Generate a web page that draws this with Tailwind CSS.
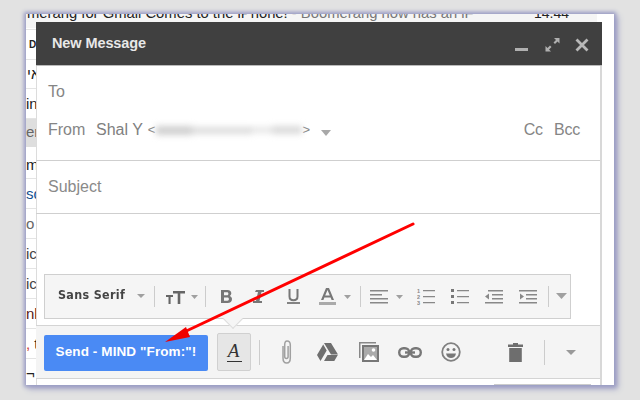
<!DOCTYPE html>
<html><head><meta charset="utf-8"><script src="https://cdn.jsdelivr.net/npm/@tailwindcss/browser@4"></script></head>
<body class="m-0 w-[640px] h-[400px] overflow-hidden bg-[#e2e2e2] font-['Liberation_Sans',Arial,sans-serif]">
<div class="relative w-[640px] h-[400px] pt-[14px] pl-[26px]">
  <!-- screenshot window -->
  <div class="relative w-[588px] h-[371px] bg-white overflow-hidden shadow-[0_0_4px_2px_#9a9cc4,3px_3px_6px_1px_#a9abc9]">
    <!-- email list behind -->
    <div class="w-[571px] text-[15px] leading-[30px] text-[#222]">
      <div class="h-[14px] bg-[#f5f5f5] overflow-hidden flex text-[14.800px] leading-[14px] pl-[1px]"><span class="w-[507px] -mt-[8px] whitespace-nowrap overflow-hidden">merang for Gmail Comes to the iPhone! <span class="text-[#777]">- Boomerang now has an iF</span></span><span class="-mt-[8px] text-[14px]">14:44</span></div>
      <div class="h-[2px] border-b border-[#e4e4e4]"></div>
      <div class="h-[30px] border-b border-[#e4e4e4] pl-[3px] text-[10px] font-bold">D</div>
      <div class="h-[30px] border-b border-[#e4e4e4] pl-[1px] -mt-px">אי</div>
      <div class="h-[30px] border-b border-[#e4e4e4]">in</div>
      <div class="h-[28px] bg-[#dedede] text-[#666] leading-[26px]">en</div>
      <div class="h-[32px] border-b border-[#e4e4e4] leading-[36px]">m</div>
      <div class="h-[30px] border-b border-[#e4e4e4] text-[#134f8f]">sd</div>
      <div class="h-[30px] border-b border-[#e4e4e4] text-[#666]">o</div>
      <div class="h-[30px] border-b border-[#e4e4e4] text-[#444]">ic</div>
      <div class="h-[30px] border-b border-[#e4e4e4] text-[#444]">ic</div>
      <div class="h-[30px] border-b border-[#e4e4e4] text-[#5a1a1a]">nk</div>
      <div class="h-[30px] border-b border-[#e4e4e4]"><span class="text-[#c33]">,</span> t</div>
      <div class="h-[24px]">¬</div>
    </div>
    <!-- compose window, over the list -->
    <div class="absolute left-[10px] top-[8px] w-[566px] h-[363px] bg-white border-r-2 border-[#d8d8d8] shadow-[inset_1px_0_0_#dcdcdc] flex flex-col">
      <div class="h-[44px] shrink-0 bg-[#404040] border-b border-[#bbb] -mr-[2px] flex items-center pl-[16px] pr-[13px]">
        <span class="text-[14.500px] font-bold tracking-[-0.1px] text-[#e8e8e8]">New Message</span>
        <div class="ml-auto flex items-center mt-[2px]">
          <svg class="mr-[16px]" width="14" height="14" viewBox="0 0 14 14"><rect x="0" y="10" width="13" height="3" fill="#b0b0b0"/></svg>
          <svg class="mr-[15px]" width="15" height="15" viewBox="0 0 15 15" fill="#b0b0b0"><path d="M9 1h5.500v5.500l-2-2-2.500 2.500-1.500-1.500 2.500-2.500zM6 14.500H.5V9l2 2L5 8.500 6.500 10 4 12.500z"/></svg>
          <svg width="14" height="14" viewBox="0 0 14 14"><path d="M1.500 1.500l11 11M12.500 1.500l-11 11" stroke="#b8b8b8" stroke-width="2.800"/></svg>
        </div>
      </div>
      <div class="h-[95px] shrink-0 border-b border-[#cfcfcf] px-[12px] text-[16px] text-[#858585]">
        <div class="pt-[17px] leading-[18px]">To</div>
        <div class="mt-[20px] flex items-center leading-[18px]">
          <span class="w-[48px]">From</span>
          <span class="text-[#808080]">Shal Y</span>
          <span class="ml-[5px] text-[13px]">&lt;</span>
          <span class="ml-[1px] w-[146px] h-[12px] flex items-center blur-[3px]">
            <span class="w-[36px] h-[9px] bg-[#d0d0d0]"></span>
            <span class="w-[60px] h-[7px] bg-[#dcdcdc]"></span>
            <span class="w-[20px] h-[6px] bg-[#e6e6e6]"></span>
            <span class="w-[30px] h-[8px] bg-[#dadada]"></span>
          </span>
          <span class="text-[13px]">&gt;</span>
          <svg class="ml-[11px] mt-[5px]" width="10" height="6" viewBox="0 0 10 6"><path d="M0 0h10L5 6z" fill="#a8a8a8"/></svg>
          <span class="ml-auto mr-[11px] tracking-[-0.2px]">Cc</span>
          <span class="mr-[8px] tracking-[-0.2px]">Bcc</span>
        </div>
      </div>
      <div class="h-[53px] shrink-0 border-b border-[#cfcfcf] px-[12px] pt-[17px] text-[16px] leading-[18px] text-[#8a8a8a]">Subject</div>
      <div class="flex-1 min-h-0 pl-[8px] pt-[60px]">
        <!-- format bar -->
        <div class="relative w-[527px] h-[45px] bg-[#f5f5f5] border border-[#cfcfcf] flex items-center text-[#777]">
          <span class="ml-[13px] text-[12px] font-bold tracking-[0.35px] text-[#444] font-['DejaVu_Sans',sans-serif] scale-x-[0.93] origin-left whitespace-nowrap w-[79px] -mt-[3px]">Sans Serif</span>
          <svg class="-mt-[1px]" width="8" height="4" viewBox="0 0 8 4"><path d="M0 0h8L4 4z" fill="#a0a0a0"/></svg>
          <span class="ml-[9px] w-px h-[21px] bg-[#ccc]"></span>
          <svg class="ml-[11px]" width="19" height="14" viewBox="0 0 19 14" fill="#666"><path d="M0 5h7v2H4.600v7H2.500V7H0zM7 1h12v2.500h-4.700V14h-2.600V3.500H7z"/></svg>
          <svg class="ml-[6px]" width="7" height="4" viewBox="0 0 7 4"><path d="M0 0h7L3.500 4z" fill="#a0a0a0"/></svg>
          <span class="ml-[7px] w-px h-[21px] bg-[#ccc]"></span>
          <svg class="ml-[15px]" width="11" height="13" viewBox="0 0 11 13"><path fill-rule="evenodd" fill="#777" d="M0 0h6.500c2.500 0 3.800 1.300 3.800 3.200 0 1.200-.6 2.200-1.600 2.700 1.400.4 2.300 1.600 2.300 3.100 0 2.500-1.700 4-4.400 4H0zM3 2.300v3h3c1 0 1.400-.6 1.400-1.500S7 2.300 6 2.300zM3 7.500v3.200h3.400c1 0 1.500-.6 1.500-1.600S7.400 7.500 6.400 7.500z"/></svg>
          <svg class="ml-[20px]" width="12" height="13" viewBox="0 0 12 13"><path d="M4 0h8v2H9.500L7.500 11H10v2H1v-2h3L6 2H3z" fill="#777"/></svg>
          <svg class="ml-[23px]" width="13" height="15" viewBox="0 0 13 15" fill="none" stroke="#777" stroke-width="2"><path d="M2.500 0v7.500c0 2.500 1.500 3.800 4 3.800s4-1.300 4-3.800V0"/><path d="M0 14h13" stroke-width="1.800"/></svg>
          <svg class="ml-[19px]" width="17" height="17" viewBox="0 0 17 17"><path d="M7 0h3l5 12h-2.400l-1-2.600H5.400l-1 2.600H2zM6.200 7.500h4.600L8.500 2z" fill="#777" fill-rule="evenodd"/><rect y="14" width="17" height="3" fill="#aaa"/></svg>
          <svg class="ml-[8px]" width="7" height="4" viewBox="0 0 7 4"><path d="M0 0h7L3.500 4z" fill="#a0a0a0"/></svg>
          <span class="ml-[9px] w-px h-[21px] bg-[#ccc]"></span>
          <svg class="ml-[9px]" width="18" height="14" viewBox="0 0 18 14" fill="#888"><path d="M0 0h18v1.500H0zM0 4h12v1.500H0zM0 8h18v1.500H0zM0 12h18v1.500H0z"/></svg>
          <svg class="ml-[8px]" width="7" height="4" viewBox="0 0 7 4"><path d="M0 0h7L3.500 4z" fill="#a0a0a0"/></svg>
          <svg class="ml-[14px]" width="18" height="17" viewBox="0 0 18 17" fill="#888"><path d="M6 2h12v1.300H6zM6 8h12v1.300H6zM6 14h12v1.300H6z"/><text x="0" y="5" font-size="5.500" font-family="Liberation Sans" font-weight="bold">1</text><text x="0" y="11" font-size="5.500" font-family="Liberation Sans" font-weight="bold">2</text><text x="0" y="17" font-size="5.500" font-family="Liberation Sans" font-weight="bold">3</text></svg>
          <svg class="ml-[16px]" width="18" height="15" viewBox="0 0 18 15" fill="#777"><path d="M0 0h3v3H0zM0 6h3v3H0zM0 12h3v3H0z"/><path d="M6 1h12v1.300H6zM6 7h12v1.300H6zM6 13h12v1.300H6z" fill="#888"/></svg>
          <svg class="ml-[16px]" width="18" height="14" viewBox="0 0 18 14" fill="#888"><path d="M3 0h15v1.500H3zM7 4h11v1.500H7zM7 8h11v1.500H7zM0 12h18v1.500H0zM4 3.500v6L0 6.500z"/></svg>
          <svg class="ml-[16px]" width="18" height="14" viewBox="0 0 18 14" fill="#888"><path d="M0 0h18v1.500H0zM7 4h11v1.500H7zM7 8h11v1.500H7zM0 12h18v1.500H0zM1 3.500v6l4-3z"/></svg>
          <span class="ml-[11px] w-px h-[21px] bg-[#ccc]"></span>
          <svg class="ml-[7px] -mt-[1px]" width="11" height="6" viewBox="0 0 11 6"><path d="M0 0h11L5.500 6z" fill="#a0a0a0"/></svg>
        </div>
        <div class="absolute left-[190px] top-[290px] w-[14px] h-[14px] rotate-45 bg-[#f5f5f5] border-r border-b border-[#ddd]"></div>
      </div>
      <!-- bottom toolbar -->
      <div class="h-[54px] shrink-0 mb-[6px] bg-[#f4f4f4] border-y border-[#d4d4d4] flex items-center pl-[8px] mt-[5px]">
        <button class="w-[164px] h-[36px] mt-[1px] rounded-[2px] bg-[#4a8af4] text-white text-[13.500px] font-bold tracking-[0.1px]">Send - MIND "From:"!</button>
        <div class="relative z-10 ml-[9px] w-[34px] h-[38px] rounded-[2px] bg-[#e6e6e6] border border-[#d0d0d0] flex flex-col items-center justify-center">
          <span class="font-['Liberation_Serif',serif] italic text-[19px] leading-[18px] text-[#333] pr-[1px]">A</span>
          <span class="w-[15px] h-[1.500px] bg-[#333] mt-[1px]"></span>
        </div>
        <span class="ml-[8px] w-px h-[25px] bg-[#ccc]"></span>
        <svg class="ml-[20px]" width="13" height="24" viewBox="0 0 13 24" fill="none" stroke="#a0a0a0" stroke-width="1.500"><path d="M3 6v12c0 3.500 1.500 5 3.700 5s3.600-1.500 3.600-5V5c0-2.500-1.300-4-3.300-4S4.700 2.500 4.700 5v11.500c0 1.300.7 2 1.700 2s1.700-.7 1.700-2V6"/></svg>
        <svg class="ml-[24px]" width="21" height="18" viewBox="0 0 21 18" fill="#6f6f6f"><path d="M7 0h7l7 11.500h-7zM6.200 1.500L9.700 7.500 3.500 18 0 12zM10.500 12h10.300l-3.500 6H7z"/></svg>
        <svg class="ml-[21px]" width="20" height="20" viewBox="0 0 20 20"><path d="M0 0h17v1.500H1.500V16H0z" fill="#888"/><path fill-rule="evenodd" fill="#777" d="M3 3h17v17H3zM5 5v13h13V5z"/><rect x="5" y="5" width="13" height="13" fill="#8a8a8a" opacity=".7"/><path d="M5 18l4-6 3 3 2-2 4 5z" fill="#fff"/><circle cx="14.500" cy="8" r="1.800" fill="#fff"/></svg>
        <svg class="ml-[19px]" width="24" height="11" viewBox="0 0 24 11" fill="none" stroke="#777" stroke-width="2.400"><rect x="1.200" y="1.200" width="10" height="8.600" rx="4.200"/><rect x="12.800" y="1.200" width="10" height="8.600" rx="4.200"/><path d="M7 5.500h10"/></svg>
        <svg class="ml-[19px]" width="20" height="20" viewBox="0 0 20 20"><circle cx="10" cy="10" r="8.800" fill="none" stroke="#808080" stroke-width="1.800"/><circle cx="7" cy="7.500" r="1.500" fill="#777"/><circle cx="13" cy="7.500" r="1.500" fill="#777"/><path d="M5 11.500h10c-.5 3-2.500 4.500-5 4.500s-4.500-1.500-5-4.500z" fill="#777"/></svg>
        <svg class="ml-[47px]" width="15" height="19" viewBox="0 0 15 19" fill="#6e6e6e"><path d="M5 0h5v1.500h5V4H0V1.500h5zM1.200 5h12.600v14H1.200z"/></svg>
        <span class="ml-[21px] w-px h-[25px] bg-[#ccc]"></span>
        <svg class="ml-[21px]" width="10" height="5" viewBox="0 0 10 5"><path d="M0 0h10L5 5z" fill="#999"/></svg>
      </div>
      <div class="absolute left-[458px] bottom-0 w-[97px] h-[1px] bg-[#ccc]"></div>
    </div>
  </div>
  <!-- annotation arrow over everything -->
  <svg class="absolute left-0 top-0" width="640" height="400" viewBox="0 0 640 400"><path d="M413 224L180 334" stroke="#ff0000" stroke-width="3" stroke-linecap="round"/><path d="M165 342L186 327 190 337z" fill="#f00000"/></svg>
</div>
</body></html>
